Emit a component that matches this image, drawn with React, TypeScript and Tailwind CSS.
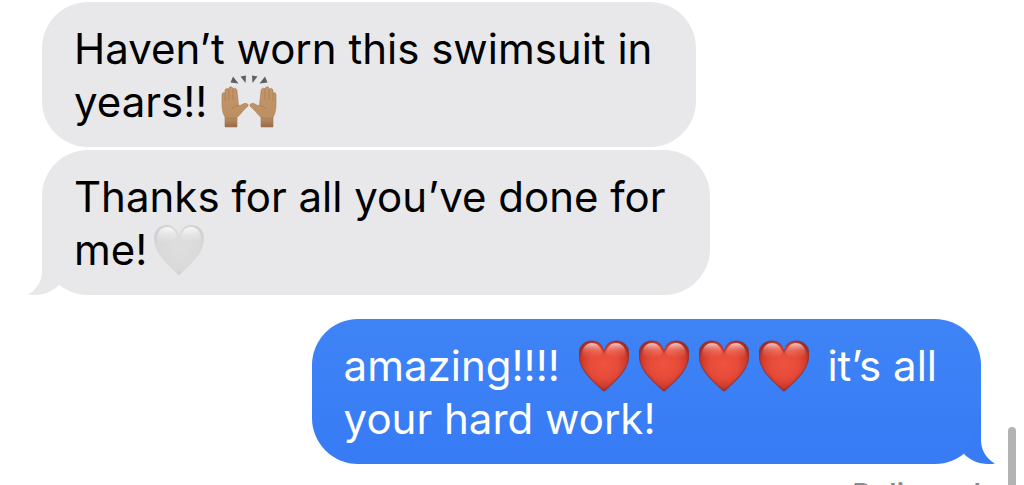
import React from 'react';

// --- Emoji ---

const HEART_PATH =
  'M25 51 C24 51 23.5 50 22.5 49 C14 41 0 30 0 14.5 C0 6 6 1 13 1 C19 1 23 5 25 11.5 C27 5 31 1 37 1 C44 1 50 6 50 14.5 C50 30 36 41 27.5 49 C26.5 50 26 51 25 51 Z';

const RedHeart: React.FC = () => (
  <svg role="img" aria-label="red heart" viewBox="0 0 50 52" className="inline-block h-[52px] w-[50px] shrink-0">
    <defs>
      <radialGradient id="redBody" gradientUnits="userSpaceOnUse" cx="25" cy="24" r="29">
        <stop offset="0" stopColor="#ee5340" />
        <stop offset="0.5" stopColor="#e64b39" />
        <stop offset="0.75" stopColor="#d23c2c" />
        <stop offset="1" stopColor="#9c2820" />
      </radialGradient>
      <linearGradient id="redShine" x1="0" y1="0" x2="0" y2="1">
        <stop offset="0" stopColor="#fff" stopOpacity="0.75" />
        <stop offset="0.5" stopColor="#ffb0a4" stopOpacity="0.3" />
        <stop offset="1" stopColor="#ff8a78" stopOpacity="0" />
      </linearGradient>
    </defs>
    <path d={HEART_PATH} fill="url(#redBody)" />
    <path d={HEART_PATH} fill="none" stroke="#8f2420" strokeOpacity="0.5" strokeWidth="1.4" />
    <path d="M3 15 C3 7 8 3 13 3 C18 3 22 7 23 13 C20 19 6 20 3 15 Z" fill="url(#redShine)" />
    <path d="M27 13 C28 7 32 3 37 3 C42 3 47 7 47 15 C44 20 30 19 27 13 Z" fill="url(#redShine)" />
  </svg>
);

const WhiteHeart: React.FC = () => (
  <svg role="img" aria-label="white heart" viewBox="0 0 50 52" className="inline-block h-[52px] w-[50px] shrink-0">
    <defs>
      <radialGradient id="whiteBody" gradientUnits="userSpaceOnUse" cx="25" cy="24" r="29">
        <stop offset="0" stopColor="#dedede" />
        <stop offset="0.7" stopColor="#dadada" />
        <stop offset="1" stopColor="#cfcfcf" />
      </radialGradient>
      <linearGradient id="whiteShine" x1="0" y1="0" x2="0" y2="1">
        <stop offset="0" stopColor="#fff" stopOpacity="0.8" />
        <stop offset="0.5" stopColor="#fff" stopOpacity="0.3" />
        <stop offset="1" stopColor="#fff" stopOpacity="0" />
      </linearGradient>
    </defs>
    <path d={HEART_PATH} fill="url(#whiteBody)" />
    <path d="M3 15 C3 7 8 3 13 3 C18 3 22 7 23 13 C20 19 6 20 3 15 Z" fill="url(#whiteShine)" />
    <path d="M27 13 C28 7 32 3 37 3 C42 3 47 7 47 15 C44 20 30 19 27 13 Z" fill="url(#whiteShine)" />
  </svg>
);

const Hand: React.FC = () => (
  <>
    <path
      d="M4 52 L4 42 C1.5 38 1 34 1 28 L1 20 C1 17 4 17 4 19 L4 16 C4 13 7 13 7.5 15 C7.5 11 11.5 11 12 14 C13 12.5 16 13 16 16 L17.5 30.5 C20 31 22 28.5 24 28.5 C27 28 28 30.5 26 32 C23 34 20 39 16 42.5 L16 52 Z"
      fill="url(#skin)"
      stroke="#a3784e"
      strokeWidth="0.6"
    />
    <path d="M4 19 V26 M7.8 15 V25 M12 14 V25" stroke="#a0754a" strokeWidth="0.6" fill="none" />
    <path d="M11 34 C12 32 15 31 17 30.5 M4 42.5 C8 44 12 43.5 16 42.5" stroke="#a0754a" strokeWidth="0.6" fill="none" />
  </>
);

const RaisedHands: React.FC = () => (
  <svg role="img" aria-label="raised hands" viewBox="0 0 56 53" className="inline-block h-[53px] w-[56px] shrink-0">
    <defs>
      <linearGradient id="skin" x1="0" y1="0" x2="0" y2="1">
        <stop offset="0" stopColor="#c3966a" />
        <stop offset="0.75" stopColor="#bd9064" />
        <stop offset="1" stopColor="#99694a" />
      </linearGradient>
    </defs>
    <Hand />
    <g transform="translate(56 0) scale(-1 1)">
      <Hand />
    </g>
    <path
      d="M12 1.5 L17.5 8.5 L9.5 7.5 Z M19.5 1.5 L25 0.5 L24.5 8 Z M31 0.5 L36.5 1.5 L31.5 8 Z M44 1.5 L46.5 7.5 L38.5 8.5 Z"
      fill="#5d5f62"
    />
  </svg>
);

// --- Bubbles ---

interface BubbleProps {
  from: 'them' | 'me';
  tail?: boolean;
  children: React.ReactNode;
}

const Bubble: React.FC<BubbleProps> = ({ from, tail, children }) => {
  const mine = from === 'me';
  return (
    <div
      className={
        mine
          ? 'relative mr-[43px] w-fit self-end rounded-[46px] bg-linear-to-b from-[#3e84f6] to-[#377bf5] pt-5 pr-11 pb-[19px] pl-8 text-white'
          : 'relative ml-[42px] w-fit self-start rounded-[46px] bg-[#e8e8ea] pt-5 pr-11 pb-[19px] pl-8 text-black'
      }
    >
      {tail && (
        <svg
          aria-hidden="true"
          viewBox="0 0 50 50"
          className={
            mine
              ? 'absolute -right-[14px] bottom-0 h-[50px] w-[50px] -scale-x-100'
              : 'absolute bottom-0 -left-[14px] h-[50px] w-[50px]'
          }
        >
          <path
            d="M14 0 V26 C14 37 8 45 0 49.5 C2 50 4 50 7 50 C17 50 25 46 31 40 Z"
            fill={mine ? '#387cf5' : '#e8e8ea'}
          />
        </svg>
      )}
      <div className="relative">{children}</div>
    </div>
  );
};

const Line: React.FC<{ children: React.ReactNode }> = ({ children }) => (
  <p className="flex h-[53px] items-center whitespace-pre">{children}</p>
);

const App: React.FC = () => {
  return (
    <main className="relative h-screen overflow-hidden bg-white font-['Inter',sans-serif] text-[42px] leading-[53px]">
      <div className="flex flex-col pt-[2px]">
        <div className="flex flex-col gap-[3px]">
          <Bubble from="them">
            <Line>Haven’t worn this swimsuit in</Line>
            <Line>
              {'years!! '}
              <span className="flex px-[2px]">
                <RaisedHands />
              </span>
            </Line>
          </Bubble>
          <Bubble from="them" tail>
            <Line>Thanks for all you’ve done for</Line>
            <Line>
              me!
              <span className="flex px-[7px]">
                <WhiteHeart />
              </span>
            </Line>
          </Bubble>
        </div>

        <div className="mt-6 flex flex-col">
          <Bubble from="me" tail>
            <Line>
              {'amazing!!!! '}
              <span className="flex gap-[10px] px-[7px]">
                <RedHeart />
                <RedHeart />
                <RedHeart />
                <RedHeart />
              </span>
              {' it’s all'}
            </Line>
            <Line>your hard work!</Line>
          </Bubble>
          <span className="mt-3 mr-[43px] self-end text-[28px] leading-9 font-semibold text-[#8a8a8e]">Delivered</span>
        </div>
      </div>

      {/* Scroll indicator */}
      <div className="absolute top-[427px] right-2 -bottom-4 w-2 rounded-full bg-[#b3b3b3]" />
    </main>
  );
};

export default App;
